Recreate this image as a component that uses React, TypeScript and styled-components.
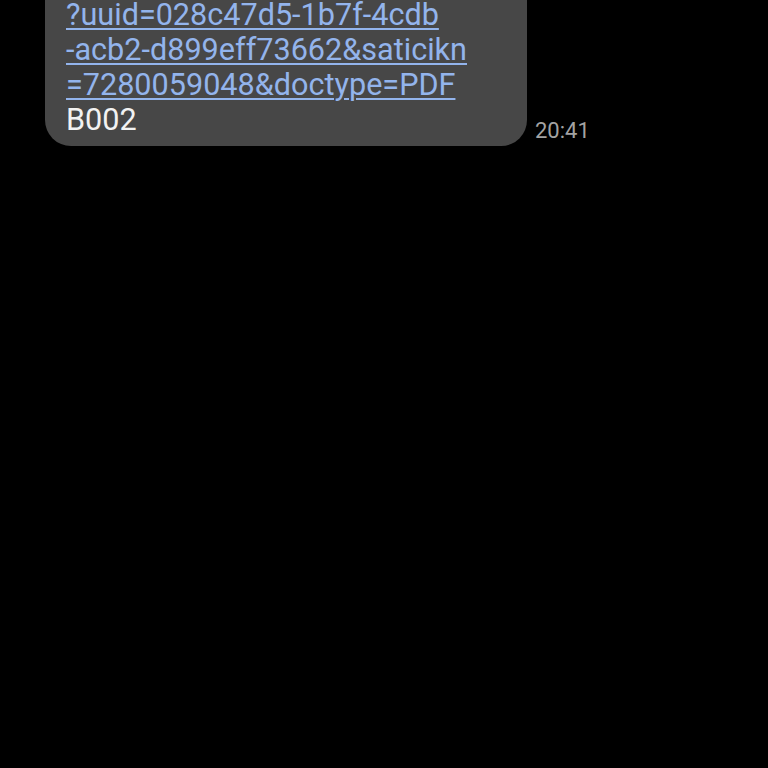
import React from "react";
import styled, { createGlobalStyle } from "styled-components";

const Global = createGlobalStyle`
  html, body { margin: 0; padding: 0; background: #000; }
  body { width: 768px; height: 768px; overflow: hidden; font-family: Roboto, "Noto Sans", sans-serif; }
`;

const Screen = styled.div`
  width: 768px;
  height: 768px;
  background: #000;
  overflow: hidden;
`;

const Row = styled.div`
  display: flex;
  align-items: flex-end;
  gap: 8px;
  padding-left: 45px;
  margin-top: -59px;
`;

const Bubble = styled.div`
  width: 482px;
  box-sizing: border-box;
  background: #474747;
  border-radius: 26px;
  padding: 56px 20px 9px 21px;
  color: #f2f2f2;
  font-size: 30.6px;
  line-height: 35px;
`;

const Link = styled.a`
  color: #93b4ec;
  text-decoration: underline;
  text-decoration-thickness: 2px;
  text-underline-offset: 3px;
`;

const Time = styled.span`
  color: #a3a3a3;
  font-size: 22px;
  line-height: 25px;
  margin-bottom: 3px;
`;

export default function App() {
  return (
    <Screen>
      <Global />
      <Row>
        <Bubble>
          <Link href="#">
            ?uuid=028c47d5-1b7f-4cdb
            <br />
            -acb2-d899eff73662&amp;saticikn
            <br />
            =7280059048&amp;doctype=PDF
          </Link>
          <br />
          B002
        </Bubble>
        <Time>20:41</Time>
      </Row>
    </Screen>
  );
}
